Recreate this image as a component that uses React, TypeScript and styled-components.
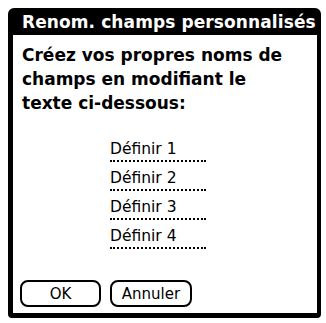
import styled, { createGlobalStyle } from "styled-components";

const GlobalStyle = createGlobalStyle`
    html, body {
        margin: 0;
        padding: 0;
        background: #ffffff;
    }
    body {
        font-family: "DejaVu Sans", "Liberation Sans", sans-serif;
        color: #000000;
    }
`;

const fields = ["Définir 1", "Définir 2", "Définir 3", "Définir 4"];

export default function App() {
    return (
        <>
            <GlobalStyle/>
            <Page>
                <Dialog>
                    <TitleBar>Renom. champs personnalisés</TitleBar>
                    <Body>
                        <Message>Créez vos propres noms de champs en modifiant le texte ci-dessous:</Message>
                        <FieldList>
                            {fields.map(label => (
                                <Field key={label}>{label}</Field>
                            ))}
                        </FieldList>
                        <ButtonRow>
                            <PalmButton $width={81}>OK</PalmButton>
                            <PalmButton $width={82}>Annuler</PalmButton>
                        </ButtonRow>
                    </Body>
                </Dialog>
            </Page>
        </>
    )
}

const Page = styled.div`
    width: 326px;
    height: 323px;
    padding: 8px 5px 5px 8px;
    box-sizing: border-box;
`;

const Dialog = styled.div`
    width: 313px;
    height: 310px;
    box-sizing: border-box;
    border: 4px solid #000;
    border-left-width: 5px;
    border-bottom-width: 5px;
    border-radius: 6px 6px 4px 4px;
    display: flex;
    flex-direction: column;
    background: #fff;
`;

const TitleBar = styled.div`
    background: #000;
    color: #fff;
    height: 23px;
    line-height: 21px;
    font-weight: bold;
    font-size: 17px;
    letter-spacing: 0.1px;
    padding-left: 9px;
    white-space: nowrap;
    overflow: hidden;
`;

const Body = styled.div`
    flex: 1;
    display: flex;
    flex-direction: column;
    padding: 8px 9px 6px 9px;
`;

const Message = styled.div`
    font-weight: bold;
    font-size: 17px;
    line-height: 24px;
    width: 270px;
`;

const FieldList = styled.div`
    display: flex;
    flex-direction: column;
    gap: 7px;
    margin: 25px 0 0 88px;
`;

const Field = styled.div`
    width: 96px;
    height: 20px;
    font-size: 15.5px;
    line-height: 19px;
    border-bottom: 2px dotted #000;
    white-space: nowrap;
`;

const ButtonRow = styled.div`
    margin-top: auto;
    display: flex;
    gap: 9px;
    margin-left: -2px;
`;

const PalmButton = styled.button<{ $width: number }>`
    width: ${p => p.$width}px;
    height: 27px;
    border: 2px solid #000;
    border-radius: 8px;
    background: #fff;
    color: #000;
    font-family: "DejaVu Sans", "Liberation Sans", sans-serif;
    font-size: 15px;
    padding: 0;
`;
